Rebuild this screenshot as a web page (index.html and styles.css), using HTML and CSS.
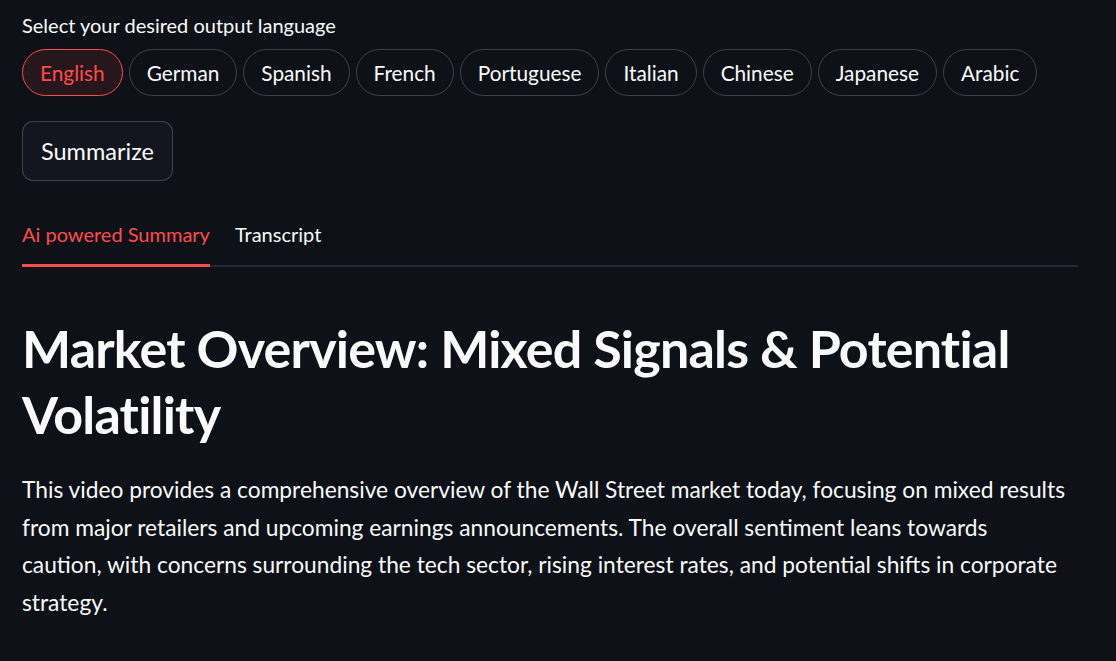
FILE: index.html
```html
<!DOCTYPE html>
<html lang="en">
<head>
<meta charset="utf-8">
<title>Summary</title>
<link rel="stylesheet" href="styles.css">
</head>
<body>
<main class="page">
  <section class="lang">
    <div class="label">Select your desired output language</div>
    <div class="pills">
      <button class="pill active">English</button>
      <button class="pill">German</button>
      <button class="pill">Spanish</button>
      <button class="pill">French</button>
      <button class="pill">Portuguese</button>
      <button class="pill">Italian</button>
      <button class="pill">Chinese</button>
      <button class="pill">Japanese</button>
      <button class="pill">Arabic</button>
    </div>
  </section>
  <button class="btn">Summarize</button>
  <nav class="tabs">
    <div class="tab active">Ai powered Summary</div>
    <div class="tab">Transcript</div>
  </nav>
  <article class="content">
    <h1 class="title">Market Overview: Mixed Signals &amp; Potential Volatility</h1>
    <p class="body">This video provides a comprehensive overview of the Wall Street market today, focusing on mixed results from major retailers and upcoming earnings announcements. The overall sentiment leans towards<br>caution, with concerns surrounding the tech sector, rising interest rates, and potential shifts in corporate strategy.</p>
  </article>
</main>
</body>
</html>
```
FILE: styles.css
```css
html, body {
  margin: 0;
  padding: 0;
  background: #0e1117;
  color: #fafafa;
  font-family: Lato, "Noto Sans", sans-serif;
}
.page {
  width: 1056px;
  padding: 12px 22px 0 22px;
  display: flex;
  flex-direction: column;
  align-items: flex-start;
}
.label {
  font-size: 20px;
  line-height: 26px;
  color: #fafafa;
}
.pills {
  display: flex;
  gap: 6px;
  margin-top: 11px;
}
.pill {
  font-family: inherit;
  font-size: 20.8px;
  color: #fafafa;
  background: transparent;
  border: 1px solid rgba(250, 250, 250, 0.2);
  border-radius: 24px;
  height: 47px;
  padding: 0 17px;
}
.pill.active {
  color: #ff4b4b;
  border-color: #ff4b4b;
  background: rgba(255, 75, 75, 0.1);
}
.btn {
  margin-top: 25px;
  font-family: inherit;
  font-size: 23.5px;
  color: #fafafa;
  background: #13161e;
  border: 1px solid rgba(250, 250, 250, 0.2);
  border-radius: 11px;
  height: 60px;
  padding: 0 18px;
}
.tabs {
  margin-top: 40px;
  align-self: stretch;
  display: flex;
  gap: 25px;
  border-bottom: 2px solid #262730;
}
.tab {
  font-size: 20px;
  line-height: 26px;
  padding-bottom: 17px;
  margin-bottom: -2px;
  border-bottom: 3px solid transparent;
}
.tab.active {
  color: #ff4b4b;
  border-bottom-color: #ff4b4b;
}
.content {
  align-self: stretch;
}
.title {
  margin: 48px 0 0 0;
  font-size: 52px;
  letter-spacing: -0.8px;
  line-height: 66px;
  font-weight: 700;
}
.body {
  margin: 24px 0 0 0;
  font-size: 22.75px;
  line-height: 37.6px;
}
```
